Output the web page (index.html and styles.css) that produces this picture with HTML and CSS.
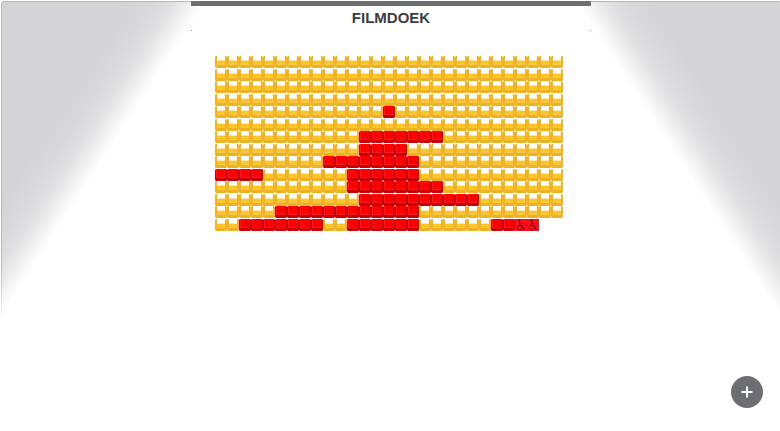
FILE: index.html
```html
<!DOCTYPE html>
<html lang="nl">
<head>
<meta charset="utf-8">
<title>Filmdoek</title>
<link rel="stylesheet" href="styles.css">
</head>
<body>
<main class="hall">
  <header class="screen">
    <h1 class="screen-title">FILMDOEK</h1>
  </header>
  <div class="seats" id="seats"></div>
  <button class="zoom" type="button" aria-label="Zoom in">
    <svg viewBox="0 0 12 12" width="12" height="12" aria-hidden="true"><path d="M6 0.500V11.500M0.500 6H11.500" stroke="#fff" stroke-width="2"/></svg>
  </button>
</main>
<script src="seats.js"></script>
</body>
</html>
```
FILE: seats.js
```js
// One entry per row: "." free, "x" taken, "w" taken wheelchair place.
const rows = [
  ".............................",
  ".............................",
  ".............................",
  ".............................",
  "..............x..............",
  ".............................",
  "............xxxxxxx..........",
  "............xxxx.............",
  ".........xxxxxxxx............",
  "xxxx.......xxxxxx............",
  "...........xxxxxxxx..........",
  "............xxxxxxxxxx.......",
  ".....xxxxxxxxxxxx............",
  "..xxxxxxx..xxxxxx......xxww"
];

const wheelchair = '<svg viewBox="0 0 12 12" width="12" height="12" aria-hidden="true">' +
  '<circle cx="4.500" cy="1.200" r="1" fill="#4a0d10"/>' +
  '<path d="M4.500 2V6.800H7.200L8.500 10.200L9.600 9.800M4.500 4.600H7M3.600 6.200A2.500 2.500 0 1 0 7 9.600" fill="none" stroke="#4a0d10" stroke-width="1"/></svg>';

const seats = document.getElementById("seats");
rows.forEach((row, r) => {
  const line = document.createElement("div");
  line.className = "row";
  [...row].forEach((kind, c) => {
    const seat = document.createElement("button");
    seat.type = "button";
    seat.className = "seat";
    seat.setAttribute("aria-label", `Rij ${r + 1}, stoel ${c + 1}`);
    if (kind !== ".") {
      seat.disabled = true;
      seat.classList.add("taken");
    }
    if (kind === "w") {
      seat.classList.add("accessible");
      seat.innerHTML = wheelchair;
    }
    line.append(seat);
  });
  seats.append(line);
});
```
FILE: styles.css
```css
* {
  box-sizing: border-box;
}

html {
  overflow: hidden;
}

body {
  margin: 0;
  font-family: "Liberation Sans", Arial, sans-serif;
  background: #fff;
}

.hall {
  width: 100%;
  min-height: calc(100vh - 1px);
  margin: 1px 0 0 1px;
  border-radius: 3px;
  background:
    linear-gradient(#b4b8b8, #b4b8b8) top / 100% 1px no-repeat,
    linear-gradient(#b4b8b8 260px, transparent 317px) left / 1px 100% no-repeat,
    linear-gradient(123deg, #d4d4d6 108px, #d9d9db 130px, #e0e0e2 145px, #f0f0f0 159px, #fff 172px, transparent 172px) left / 50% 100% no-repeat,
    linear-gradient(237deg, #d4d4d6 108px, #d9d9db 130px, #e0e0e2 145px, #f0f0f0 159px, #fff 172px, transparent 172px) right / 50% 100% no-repeat;
}

.screen {
  position: relative;
  width: 400px;
  max-width: 100%;
  margin: 0 auto;
  border-top: 5px solid #6d6e71;
}

.screen::before,
.screen::after {
  content: "";
  position: absolute;
  bottom: 0;
  width: 1px;
  height: 1px;
  background: #8c8c8e;
}

.screen::before {
  left: 0;
}

.screen::after {
  right: 0;
}

.screen-title {
  margin: 0;
  padding: 3px 0 4px;
  font-size: 15px;
  line-height: 18px;
  text-align: center;
  color: #3d3d3f;
}

.seats {
  width: fit-content;
  margin: 25px auto 0;
  padding-right: 4px;
}

.row {
  display: flex;
}

.row:nth-child(odd) {
  margin-bottom: 1px;
}

.seat {
  width: 12px;
  height: 12px;
  padding: 0;
  border: 0;
  background:
    linear-gradient(#f8d98e, #f8d98e) 0 0 / 1px 1px no-repeat,
    linear-gradient(#f8d98e, #f8d98e) 100% 0 / 1px 1px no-repeat,
    linear-gradient(#f9dc94, #f9dc94) 0 100% / 1px 1px no-repeat,
    linear-gradient(#f9dc94, #f9dc94) 100% 100% / 1px 1px no-repeat,
    linear-gradient(#efb42a, #efb42a) 0 0 / 2px 100% no-repeat,
    linear-gradient(#efb42a, #efb42a) 100% 0 / 2px 100% no-repeat,
    linear-gradient(transparent 4px, #fbe6b0 4px 5px, #ffc425 5px 8px, #f9ca4a 8px 9px, #edb220 9px);
}

.taken {
  background:
    linear-gradient(#f06a6a, #f06a6a) 0 0 / 1px 1px no-repeat,
    linear-gradient(#f06a6a, #f06a6a) 100% 0 / 1px 1px no-repeat,
    linear-gradient(#ee7070, #ee7070) 0 100% / 1px 1px no-repeat,
    linear-gradient(#ee7070, #ee7070) 100% 100% / 1px 1px no-repeat,
    linear-gradient(#cc0006, #cc0006) 0 0 / 1px 100% no-repeat,
    linear-gradient(#cc0006, #cc0006) 100% 0 / 1px 100% no-repeat,
    linear-gradient(#f01c20, #f01c20) 1px 0 / 1px 9px no-repeat,
    linear-gradient(#ff0000 8px, #f01c20 8px 9px, #c80006 9px);
}

.accessible {
  background: #fc0d1b;
}

.accessible svg {
  display: block;
}

.zoom {
  position: fixed;
  right: 17px;
  bottom: 23px;
  display: flex;
  align-items: center;
  justify-content: center;
  width: 32px;
  height: 32px;
  padding: 0;
  border: 0;
  border-radius: 50%;
  background: #6d6e71;
}
```
